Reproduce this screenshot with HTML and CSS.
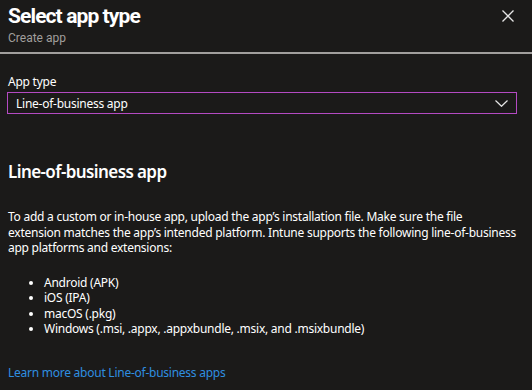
FILE: index.html
```html
<!DOCTYPE html>
<html lang="en">
<head>
    <meta charset="UTF-8">
    <title>Select app type</title>
    <link rel="stylesheet" href="styles.css">
</head>
<body>

    <div class="header">
        <div class="titles">
            <div class="title">Select app type</div>
            <div class="subtitle">Create app</div>
        </div>
        <button class="close" type="button" aria-label="Close">
            <svg width="12" height="12" viewBox="0 0 12 12">
                <path d="M0.5 0.5 L11.5 11.5 M11.5 0.5 L0.5 11.5" stroke="#e6e6e6" stroke-width="1.3" fill="none"/>
            </svg>
        </button>
    </div>

    <div class="divider"></div>

    <div class="content">
        <label class="field-label">App type</label>
        <div class="select">
            <span>Line-of-business app</span>
            <svg width="13" height="7" viewBox="0 0 13 7">
                <path d="M0.5 0.5 L6.5 6.3 L12.5 0.5" stroke="#e6e6e6" stroke-width="1.2" fill="none"/>
            </svg>
        </div>

        <h2>Line-of-business app</h2>

        <p>To add a custom or in-house app, upload the app’s installation file. Make sure the file<br>
        extension matches the app’s intended platform. Intune supports the following <span class="nowrap">line-of-business</span> app platforms and extensions:</p>

        <ul>
            <li>Android (APK)</li>
            <li>iOS (IPA)</li>
            <li>macOS (.pkg)</li>
            <li>Windows (.msi, .appx, .appxbundle, .msix, and .msixbundle)</li>
        </ul>

        <a class="learn" href="#">Learn more about Line-of-business apps</a>
    </div>

</body>
</html>
```

FILE: styles.css
```css
body {
    margin: 0;
    background-color: #1b1a19;
    color: #ffffff;
    font-family: "Noto Sans", "Open Sans", sans-serif;
    font-size: 12px;
    letter-spacing: -0.25px;
    width: 532px;
    height: 390px;
    overflow: hidden;
}
.header {
    display: flex;
    justify-content: space-between;
    padding: 0 18px 0 8px;
    height: 52px;
    font-family: Roboto, "Liberation Sans", sans-serif;
}
.title {
    font-size: 21px;
    font-weight: bold;
    line-height: 22px;
    padding-top: 5px;
    letter-spacing: -0.9px;
}
.subtitle {
    font-size: 12px;
    color: #a19f9d;
    line-height: 12px;
    margin-top: 5px;
    letter-spacing: 0;
}
.close {
    background: none;
    border: none;
    padding: 0;
    margin-top: 10px;
    height: 12px;
    cursor: pointer;
}
.close svg {
    display: block;
}
.divider {
    height: 2px;
    background-color: #a19f9d;
}
.content {
    padding: 19px 15px 0 7px;
}
.field-label {
    display: block;
    font-size: 12px;
    line-height: 18px;
    padding-left: 1px;
    margin-bottom: 1px;
}
.select {
    display: flex;
    justify-content: space-between;
    align-items: center;
    height: 20px;
    border: 1px solid #b44ac2;
    padding: 0 8px;
    font-size: 12px;
}
h2 {
    font-size: 17px;
    font-weight: 600;
    letter-spacing: -0.6px;
    margin: 46px 0 0 1px;
    line-height: 24px;
}
p {
    margin: 25px -6px 0 1px;
    line-height: 15.5px;
}
.nowrap {
    white-space: nowrap;
}
ul {
    margin: 19px 0 0 0;
    padding-left: 37px;
    line-height: 15.5px;
}
.learn {
    display: block;
    margin: 27px 0 0 1px;
    color: #2f8fe0;
    text-decoration: none;
}
```
